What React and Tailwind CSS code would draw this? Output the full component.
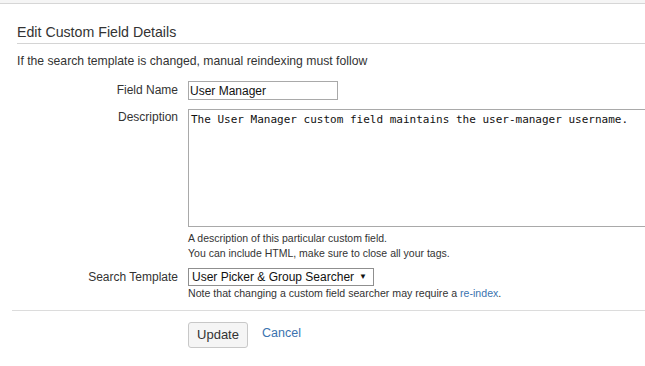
import React from 'react';

function FormRow({ label, labelClass, children }) {
  return (
    <div className="flex items-start">
      <label className={`w-[178px] shrink-0 text-right text-[12px] text-[#333] ${labelClass}`}>{label}</label>
      <div className="ml-[10px] flex flex-col">{children}</div>
    </div>
  );
}

export default function App() {
  return (
    <div className="min-h-screen w-full overflow-hidden bg-white font-['Liberation_Sans',Arial,sans-serif] text-[#333]">
      <div className="h-[4px] border-b border-[#d6d6d6] bg-[#f5f5f5]" />

      <h2 className="ml-[17px] mt-[18px] border-b border-[#d4d4d4] pb-[1px] text-[14.2px] font-normal leading-[20px] text-[#333]">
        Edit Custom Field Details
      </h2>
      <p className="ml-[17px] mt-[9px] text-[12.2px] leading-[16px]">
        If the search template is changed, manual reindexing must follow
      </p>

      <form className="mt-[12px]" onSubmit={(e) => e.preventDefault()}>
        <FormRow label="Field Name" labelClass="leading-[19px]">
          <input
            type="text"
            defaultValue="User Manager"
            className="h-[19px] w-[150px] border border-[#a9a9a9] px-[1px] text-[12px] leading-[17px] text-[#111] outline-none"
          />
        </FormRow>

        <div className="mt-[9px]">
          <FormRow label="Description" labelClass="leading-[16px]">
            <textarea
              defaultValue="The User Manager custom field maintains the user-manager username."
              className="h-[118px] w-[520px] resize-none border border-[#a9a9a9] px-[2px] pt-[3px] font-['DejaVu_Sans_Mono','Liberation_Mono',monospace] text-[11px] leading-[13px] text-[#111] outline-none"
            />
            <div className="mt-[4px] text-[10.5px] leading-[15px] text-[#333]">
              <div>A description of this particular custom field.</div>
              <div>You can include HTML, make sure to close all your tags.</div>
            </div>
          </FormRow>
        </div>

        <div className="mt-[7px]">
          <FormRow label="Search Template" labelClass="leading-[18px]">
            <div className="flex h-[18px] w-[186px] items-center border border-[#8f8f8f] bg-white pl-[3px] text-[12px] leading-[16px] text-[#111]">
              <span>User Picker &amp; Group Searcher</span>
              <span className="ml-[5px] text-[8px]">▼</span>
            </div>
            <div className="text-[10.6px] leading-[14px] text-[#333]">
              Note that changing a custom field searcher may require a{' '}
              <a href="#" className="text-[#3b73af]">re-index</a>.
            </div>
          </FormRow>
        </div>

        <div className="ml-[12px] mt-[10px] border-t border-[#dcdcdc]" />

        <div className="ml-[188px] mt-[11px] flex items-start">
          <button
            type="submit"
            className="h-[26px] w-[60px] rounded-[3px] border border-[#c8c8c8] bg-[#f5f5f5] text-[13px] text-[#333]"
          >
            Update
          </button>
          <a href="#" className="ml-[14px] mt-[3px] text-[12.5px] leading-[16px] text-[#3b73af]">
            Cancel
          </a>
        </div>
      </form>
    </div>
  );
}
